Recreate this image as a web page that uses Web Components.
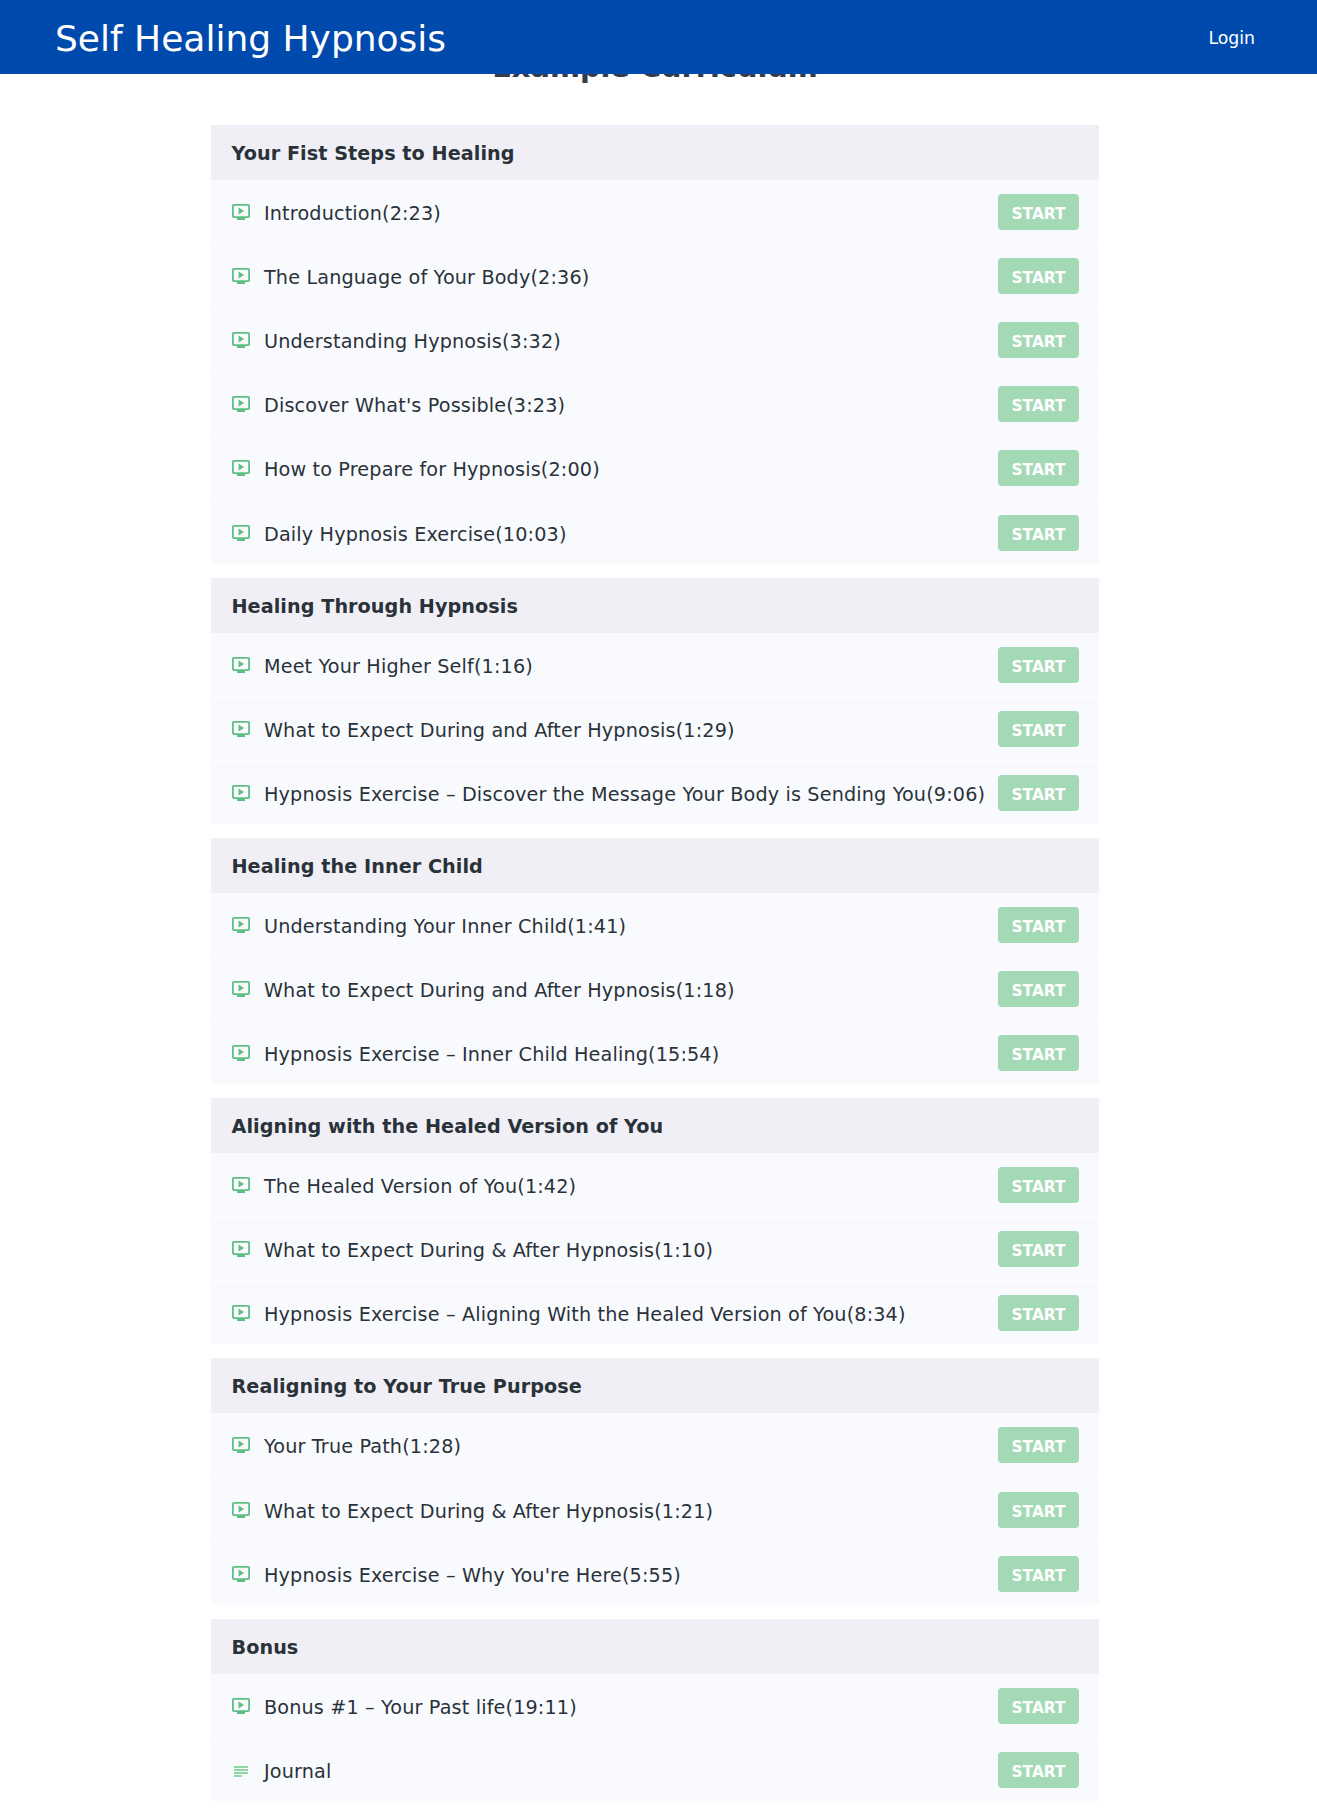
<!DOCTYPE html>
<html>
<head>
<meta charset="utf-8">
<title>Self Healing Hypnosis</title>
<style>
  html, body { margin: 0; padding: 0; background: #fff; font-family: "DejaVu Sans", sans-serif; color: #2a3239; }
  #page { display: block; height: 1812px; overflow: hidden; }
</style>
</head>
<body>
<div id="page">
<site-header></site-header>
<curriculum-list heading="Example Curriculum">
  <course-section title="Your Fist Steps to Healing">
    <lesson-row>Introduction(2:23)</lesson-row>
    <lesson-row>The Language of Your Body(2:36)</lesson-row>
    <lesson-row>Understanding Hypnosis(3:32)</lesson-row>
    <lesson-row>Discover What's Possible(3:23)</lesson-row>
    <lesson-row>How to Prepare for Hypnosis(2:00)</lesson-row>
    <lesson-row>Daily Hypnosis Exercise(10:03)</lesson-row>
  </course-section>
  <course-section title="Healing Through Hypnosis">
    <lesson-row>Meet Your Higher Self(1:16)</lesson-row>
    <lesson-row>What to Expect During and After Hypnosis(1:29)</lesson-row>
    <lesson-row>Hypnosis Exercise – Discover the Message Your Body is Sending You(9:06)</lesson-row>
  </course-section>
  <course-section title="Healing the Inner Child">
    <lesson-row>Understanding Your Inner Child(1:41)</lesson-row>
    <lesson-row>What to Expect During and After Hypnosis(1:18)</lesson-row>
    <lesson-row>Hypnosis Exercise – Inner Child Healing(15:54)</lesson-row>
  </course-section>
  <course-section title="Aligning with the Healed Version of You">
    <lesson-row>The Healed Version of You(1:42)</lesson-row>
    <lesson-row>What to Expect During &amp; After Hypnosis(1:10)</lesson-row>
    <lesson-row>Hypnosis Exercise – Aligning With the Healed Version of You(8:34)</lesson-row>
  </course-section>
  <course-section title="Realigning to Your True Purpose">
    <lesson-row>Your True Path(1:28)</lesson-row>
    <lesson-row>What to Expect During &amp; After Hypnosis(1:21)</lesson-row>
    <lesson-row>Hypnosis Exercise – Why You're Here(5:55)</lesson-row>
  </course-section>
  <course-section title="Bonus">
    <lesson-row>Bonus #1 – Your Past life(19:11)</lesson-row>
    <lesson-row icon="text">Journal</lesson-row>
  </course-section>
</curriculum-list>
</div>

<script>
class SiteHeader extends HTMLElement {
  constructor() {
    super();
    this.shadowDOM = this.attachShadow({ mode: 'open' });
  }

  connectedCallback() {
    this.shadowDOM.innerHTML = `
      <style>
        :host {
          display: flex;
          justify-content: space-between;
          align-items: center;
          position: fixed;
          top: 0;
          left: 0;
          right: 0;
          height: 74px;
          padding: 0 62px 0 55px;
          background-color: #004aad;
          color: #fff;
          z-index: 2;
        }
        .logo {
          padding-top: 2px;
          font-size: 36px;
          color: #fff;
          text-decoration: none;
        }
        .login {
          padding-top: 2px;
          font-size: 17.3px;
          color: #fff;
          text-decoration: none;
        }
      </style>
      <a class="logo" href="#">Self Healing Hypnosis</a>
      <a class="login" href="#">Login</a>
    `;
  }
}

class CurriculumList extends HTMLElement {
  constructor() {
    super();
    this.shadowDOM = this.attachShadow({ mode: 'open' });
  }

  connectedCallback() {
    this.shadowDOM.innerHTML = `
      <style>
        :host {
          display: block;
          width: 888px;
          margin-left: 211px;
        }
        h2 {
          margin: 0;
          height: 125px;
          padding-top: 48px;
          box-sizing: border-box;
          font-size: 28.8px;
          line-height: 38px;
          font-weight: 700;
          color: #333c48;
          text-align: center;
          white-space: nowrap;
        }
        .sections {
          display: flex;
          flex-direction: column;
          gap: 13px;
        }
      </style>
      <h2>${this.getAttribute('heading')}</h2>
      <div class="sections"><slot></slot></div>
    `;
  }
}

class CourseSection extends HTMLElement {
  constructor() {
    super();
    this.shadowDOM = this.attachShadow({ mode: 'open' });
  }

  connectedCallback() {
    this.shadowDOM.innerHTML = `
      <style>
        :host {
          display: block;
        }
        .title {
          height: 55px;
          box-sizing: border-box;
          display: flex;
          align-items: center;
          padding: 2px 21px 0 20.5px;
          background-color: #f0eff5;
          font-size: 19.2px;
          font-weight: 700;
          letter-spacing: 0.06px;
          color: #2a3239;
        }
      </style>
      <div class="title">${this.getAttribute('title')}</div>
      <slot></slot>
    `;
  }
}

const VIDEO_ICON = `
  <svg width="18" height="16" viewBox="0 0 18 16" fill="none">
    <rect x="0.9" y="0.9" width="16.2" height="12.2" rx="1" stroke="#5fbf82" stroke-width="1.8"/>
    <path d="M6.5 3.5 L12 7 L6.5 10.5 Z" fill="#5fbf82"/>
    <rect x="5" y="14" width="8" height="2" fill="#5fbf82"/>
  </svg>`;

const TEXT_ICON = `
  <svg width="18" height="16" viewBox="0 0 18 16" fill="#8fd6a6">
    <rect x="2" y="4" width="14" height="2"/>
    <rect x="2" y="7" width="14" height="2"/>
    <rect x="2" y="10" width="14" height="2"/>
    <rect x="2" y="13" width="8" height="2"/>
  </svg>`;

class LessonRow extends HTMLElement {
  constructor() {
    super();
    this.shadowDOM = this.attachShadow({ mode: 'open' });
  }

  connectedCallback() {
    const icon = this.getAttribute('icon') === 'text' ? TEXT_ICON : VIDEO_ICON;
    this.shadowDOM.innerHTML = `
      <style>
        :host {
          display: flex;
          align-items: center;
          height: 64.1px;
          box-sizing: border-box;
          padding: 1px 20px 0 21px;
          background-color: #f9fafe;
          border-bottom: 1px solid #fff;
          font-size: 19.2px;
          color: #2a3239;
        }
        .icon {
          display: flex;
          width: 32px;
          flex: none;
        }
        .name {
          flex: 1;
          padding-top: 3px;
          letter-spacing: 0.15px;
          white-space: nowrap;
        }
        .start {
          flex: none;
          width: 81px;
          height: 36px;
          box-sizing: border-box;
          padding-top: 4px;
          display: flex;
          align-items: center;
          justify-content: center;
          background-color: #a3dab5;
          border-radius: 4px;
          color: #fff;
          font-size: 15.36px;
          font-weight: 700;
          text-decoration: none;
        }
      </style>
      <span class="icon">${icon}</span>
      <span class="name"><slot></slot></span>
      <a class="start" href="#">START</a>
    `;
  }
}

customElements.define('site-header', SiteHeader);
customElements.define('curriculum-list', CurriculumList);
customElements.define('course-section', CourseSection);
customElements.define('lesson-row', LessonRow);
</script>
</body>
</html>
